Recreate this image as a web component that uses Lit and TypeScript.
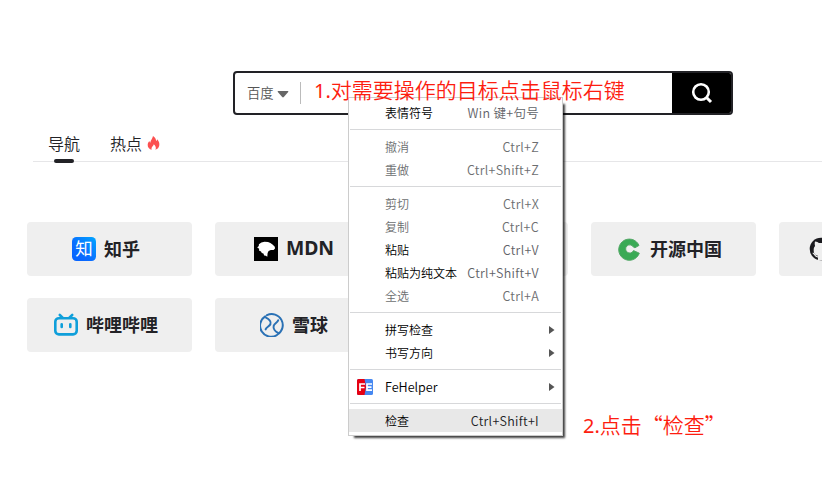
import { LitElement, html, css, svg, nothing } from "lit";
import { customElement } from "lit/decorators.js";
import { classMap } from "lit/directives/class-map.js";

type MenuItem = { label: string; keys?: string; off?: boolean; sub?: boolean; icon?: boolean; hot?: boolean };

const groups: MenuItem[][] = [
  [{ label: "表情符号", keys: "Win 键+句号" }],
  [
    { label: "撤消", keys: "Ctrl+Z", off: true },
    { label: "重做", keys: "Ctrl+Shift+Z", off: true },
  ],
  [
    { label: "剪切", keys: "Ctrl+X", off: true },
    { label: "复制", keys: "Ctrl+C", off: true },
    { label: "粘贴", keys: "Ctrl+V" },
    { label: "粘贴为纯文本", keys: "Ctrl+Shift+V" },
    { label: "全选", keys: "Ctrl+A", off: true },
  ],
  [
    { label: "拼写检查", sub: true },
    { label: "书写方向", sub: true },
  ],
  [{ label: "FeHelper", sub: true, icon: true }],
  [{ label: "检查", keys: "Ctrl+Shift+I", hot: true }],
];

const icons: Record<string, unknown> = {
  zhihu: svg`<defs><linearGradient id="zh" x1="1" y1="0" x2="0" y2="1"><stop offset="0" stop-color="#00a6ff"/><stop offset=".6" stop-color="#0a6cff"/><stop offset="1" stop-color="#0561ff"/></linearGradient></defs>
    <rect width="24" height="24" rx="4.5" fill="url(#zh)"/>
    <text x="12" y="18.4" text-anchor="middle" font-size="17.5" font-weight="400" fill="#fff" font-family="Noto Sans CJK SC, sans-serif">知</text>`,
  mdn: svg`<rect width="24" height="24" fill="#000"/>
    <path d="M3.2 10.6 4.8 9 4.9 7.2 7.4 5.6 10.5 4.8 14 5 16.4 6 18.5 7.4 20.8 9.8 21 11.6 19.6 13 16.8 13 14.6 14 13.6 16 13.3 19.8 11.8 18.8 10.2 18.6 9.4 16.6 7.8 16 7 14.4 5 13.4 5.2 11.8Z" fill="#fff"/>`,
  oschina: svg`<path d="M21 8.4A10.6 10.6 0 1 0 21.3 16.2L15.5 13.6A4.1 4.1 0 1 1 15.4 10.1L17 10.8Z" fill="#3aaa55" stroke="#55a868" stroke-width="1"/>`,
  github: svg`<circle cx="12" cy="12" r="11.3" fill="#1b1b1f"/>
    <path d="M9 23V18.8C5 18 4.7 15.6 4.7 12.7 4.7 11 5.3 9.8 6.1 9 5.6 7.5 5.6 6 6 4.6 8 4.6 9.1 5.6 9.8 6.1Q12 5.7 14.2 6.1C15 5.6 16 4.6 18 4.6 18.4 6 18.4 7.5 17.9 9 18.7 9.8 19.3 11 19.3 12.7 19.3 15.6 19 18 15 18.8V23Z" fill="#efefef"/>
    <path d="M3.7 16.2C6 16.2 5.4 20.2 9 19.8" fill="none" stroke="#efefef" stroke-width="1.2"/>`,
  bilibili: svg`<path d="M5.8 2 8.6 4.6M18.2 2 15.4 4.6" stroke="#0f9fda" stroke-width="2.6" stroke-linecap="round"/>
    <rect x="1.3" y="5.2" width="21.4" height="16.2" rx="3.6" fill="none" stroke="#0f9fda" stroke-width="2.6"/>
    <path d="M7.7 11.2v2.8M16.3 11.2v2.8" stroke="#0f9fda" stroke-width="2.6" stroke-linecap="round"/>`,
  xueqiu: svg`<g fill="none" stroke="#2a71b5" stroke-linecap="round" stroke-width="2">
    <path d="M7 2.2A11 11 0 0 1 17.5 21.5M17 22A11 11 0 0 1 5.2 3.3"/>
    <path d="M6 4.6C9.2 6.2 11.4 9 10.4 11.3 9.4 13.4 6.4 13.8 5.6 16.4M18.2 7.2C17.6 9.6 14.4 10.4 13.7 12.7 13 15.4 15 18.4 18 19.8"/></g>`,
};

const sites = [
  ["zhihu", "知乎"], ["mdn", "MDN"], ["", ""], ["oschina", "开源中国"], ["github", "Github"],
  ["bilibili", "哔哩哔哩"], ["xueqiu", "雪球"],
];

@customElement("app-root")
export class AppRoot extends LitElement {
  static styles = css`
    :host { display: block; position: relative; width: 822px; height: 479px; overflow: hidden; background: #fff;
      color: #222226; font-family: "Noto Sans CJK SC", sans-serif; }
    * { box-sizing: border-box; }
    .page { padding: 71px 0 0; }
    .search { display: flex; align-items: stretch; width: 500px; height: 44px; margin-left: 233px;
      border: 2px solid #222226; border-radius: 4px; overflow: hidden; }
    .engine { display: flex; align-items: center; padding: 0 0 1px 12px; font-size: 13.3px; font-weight: 350; color: #555; flex: 1; }
    .caret { width: 12px; height: 8px; margin: 2px 0 0 3px; fill: #666; }
    .rule { width: 1px; height: 22px; background: #bbb; margin-left: 11px; }
    .go { width: 59px; background: #000; display: flex; align-items: center; justify-content: center; }
    .tabs { display: flex; margin: 15px 0 0 33px; padding-left: 15px; height: 32px; border-bottom: 1px solid #e6e6e8;
      font-size: 16px; font-weight: 350; line-height: 26px; gap: 30px; }
    .tab { display: flex; flex-direction: column; align-items: center; }
    .name { display: flex; align-items: center; gap: 5px; height: 28px; flex: none; padding-bottom: 3px; }
    .bar { width: 20px; height: 4px; border-radius: 2px; background: #222226; flex: none; margin-top: 1px; }
    .grid { display: grid; grid-template-columns: repeat(5, 165px); grid-auto-rows: 54px; gap: 22px 23px;
      margin: 60px 0 0 27px; width: 917px; }
    .card { display: flex; align-items: center; justify-content: center; gap: 8px; background: #efefef; padding-right: 7px;
      border-radius: 4px; font-size: 18px; font-weight: 700; line-height: 52px; }
    .card span { padding-bottom: 2px; }
    .card svg { flex: none; }
    .latin { font-family: "Noto Sans", sans-serif; font-size: 19.4px; }
    .menu { position: absolute; left: 348px; top: 97px; width: 215px; height: 339px; background: #fff;
      border: 1px solid #ccc; padding: 3px 0 2px; font-size: 12px; font-weight: 350; color: #000; }
    .shadow { position: absolute; left: 354px; top: 104px; width: 209px; height: 332px; box-shadow: 1px 1px 2px 1px rgba(0,0,0,.75); }
    .sep { height: 1px; margin: 5px 1px; background: #d7d8da; }
    .item { display: flex; align-items: center; height: 23px; line-height: 22px; padding-right: 5px; }
    .hot { background: #e8e8e8; }
    .slot { width: 36px; padding-left: 8px; height: 16px; flex: none; }
    .slot svg { display: block; }
    .label { flex: 1; white-space: nowrap; }
    .en { font-size: 12.6px; }
    .keys { color: #5f6368; font-size: 12.5px; letter-spacing: .3px; padding-right: 18px; white-space: nowrap; }
    .off, .off .keys { color: #6c6e70; }
    .hot .keys { color: #202124; }
    .arrow { width: 6px; height: 8px; fill: #555; margin: 0 2px 0 0; }
    .note { position: absolute; color: #fd1d10; font-size: 21px; line-height: 30px; font-weight: 350; white-space: nowrap; }
    .n1 { left: 314px; top: 74px; }
    .n2 { left: 583px; top: 409px; }
    .num { font-family: "Noto Sans", sans-serif; font-weight: 400; font-size: 20px; }
  `;

  private item(m: MenuItem) {
    return html`<div class=${classMap({ item: true, off: !!m.off, hot: !!m.hot })}>
      <div class="slot">${m.icon ? html`<svg width="16" height="16" viewBox="0 0 16 16">
        <rect width="16" height="16" rx="1.5" fill="#4688f1"/><path d="M1.5 0H7.5L9 8 7.5 16H1.5A1.5 1.5 0 0 1 0 14.5V1.5A1.5 1.5 0 0 1 1.5 0Z" fill="#e60012"/>
        <path d="M3 12V5H8M3 8.5H7.5M15 5H10V11.2H15M10 8.2H14.5" fill="none" stroke="#fff" stroke-width="1.7"/></svg>` : nothing}</div>
      <span class=${classMap({ label: true, en: !!m.icon })}>${m.label}</span>
      ${m.keys ? html`<span class="keys">${m.keys}</span>` : nothing}
      ${m.sub ? html`<svg class="arrow" viewBox="0 0 6 8"><path d="M0 0 5.5 4 0 8Z"/></svg>` : nothing}
    </div>`;
  }

  render() {
    return html`
      <div class="page">
        <div class="search">
          <div class="engine">百度<svg class="caret" viewBox="0 0 12 8"><path d="M1.2 1H10.8Q11.8 1 11.2 1.9L6.8 7Q6 7.8 5.2 7L.8 1.9Q.2 1 1.2 1Z"/></svg><span class="rule"></span></div>
          <div class="go"><svg width="24" height="24" viewBox="0 0 24 24" fill="none" stroke="#fff" stroke-width="2.6"><circle cx="11" cy="11" r="7.8"/><path d="M16.5 16.5 21 21" stroke-width="3"/></svg></div>
        </div>
        <div class="tabs">
          <div class="tab"><span class="name">导航</span><span class="bar"></span></div>
          <div class="tab"><span class="name">热点<svg width="13" height="14" viewBox="0 0 13 14"><path d="M6 0C8.5 1.5 9 3.6 9.1 5 9.8 4.6 10 3.8 10.1 3.2 12 5 12.6 7.3 12.3 9.3 12 11.6 10.6 13.2 8.4 13.8 9.5 11.8 8.6 10 6.8 8.3 6.6 10 4 10.8 4.7 13.8 2.3 13.2 .6 11.4 .7 9 .7 7.4 1.4 6.4 2.3 5.1 2.5 6 2.8 6.5 3.3 6.8 3.4 4 5.6 2.8 6 0Z" fill="#fc5050"/></svg></span></div>
        </div>
        <div class="grid">${sites.map(([icon, name]) => html`<div class="card">
          ${icon ? html`<svg width="24" height="24" viewBox="0 0 24 24">${icons[icon]}</svg>` : nothing}
          <span class=${classMap({ latin: /^[A-Z]/.test(name) })}>${name}</span></div>`)}</div>
      </div>
      <div class="shadow"></div>
      <div class="menu">${groups.map((g, i) => html`${i ? html`<div class="sep"></div>` : nothing}${g.map((m) => this.item(m))}`)}</div>
      <div class="note n1"><span class="num">1.</span>对需要操作的目标点击鼠标右键</div>
      <div class="note n2"><span class="num">2.</span>点击“检查”</div>
    `;
  }
}
